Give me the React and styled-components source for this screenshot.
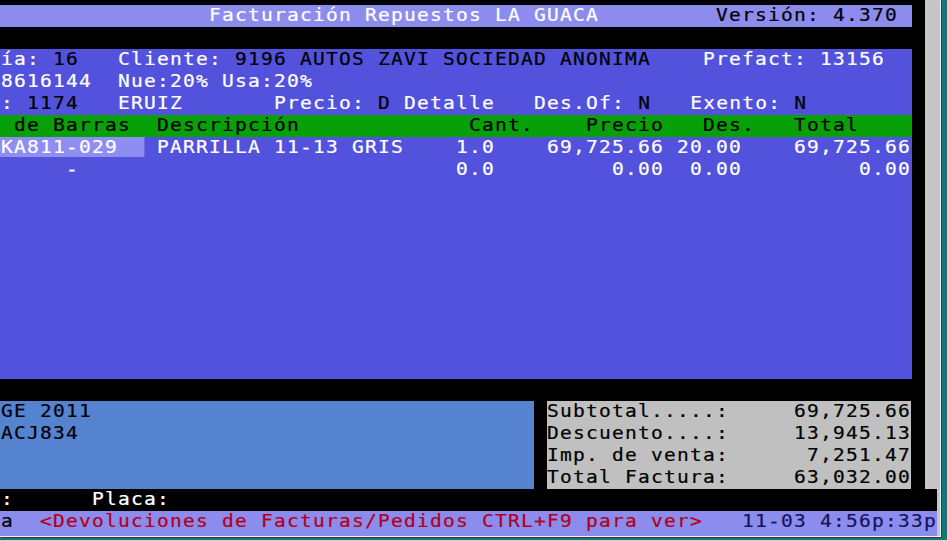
import React from 'react';
import styled, { createGlobalStyle } from 'styled-components';

// console grid: 13px cells, 22px rows, first visible column is -1 (cropped)
const CELL = 13;
const STRETCH = 1.15;
const FONT_SIZE = 17;
const ADVANCE = 0.60205 * FONT_SIZE;

const tones = {
  w: '#ffffff',
  k: '#000000',
  r: '#b00018',
  n: '#14145a',
  hi: '#ffffff',
};

const GlobalStyle = createGlobalStyle`
  html, body {
    margin: 0;
    padding: 0;
  }
  body {
    background: #0b7b7b;
    overflow: hidden;
  }
`;

const Desktop = styled.div`
  width: 947px;
  height: 540px;
  background: #0b7b7b;
`;

const Window = styled.div`
  width: 940px;
  height: 536px;
  background: #000;
  border-right: 1px solid #f0f0f0;
  border-bottom: 1px solid #f0f0f0;
  box-shadow: 1px 1px 0 #3c3c3c;
  display: flex;
  flex-direction: column;
  font-family: "DejaVu Sans Mono", monospace;
`;

const Main = styled.div`
  display: flex;
  height: 489px;
`;

const Console = styled.div`
  width: 912px;
  padding-top: 5px;
  overflow: hidden;
  display: flex;
  flex-direction: column;
`;

const Gutter = styled.div`
  width: 13px;
  background: #000;
`;

const ScrollTrack = styled.div`
  width: 15px;
  background: #c6c6c6;
`;

const Row = styled.div`
  height: 22px;
  background: ${(p) => p.$bg || '#000'};
  overflow: hidden;
`;

const Block = styled.div`
  height: ${(p) => p.$rows * 22}px;
  background: ${(p) => p.$bg};
  overflow: hidden;
`;

const Line = styled.div`
  height: 22px;
  line-height: 21px;
  font-size: ${FONT_SIZE}px;
  white-space: pre;
  letter-spacing: ${CELL / STRETCH - ADVANCE}px;
  transform: scaleX(${STRETCH});
  transform-origin: 0 0;
  margin-left: ${(p) => (p.$shift ? '-12.4px' : '0')};
  color: ${(p) => (p.$dark ? '#000' : '#fff')};
  -webkit-text-stroke: 0.2px currentColor;
`;

const Tone = styled.span`
  color: ${(p) => tones[p.$tone]};
  background: ${(p) => (p.$tone === 'hi' ? '#8e8ef2' : 'transparent')};
`;

const Panels = styled.div`
  display: grid;
  grid-template-columns: 533.6px 364px;
  column-gap: 13px;
  height: 88px;
`;

const Notes = styled.div`
  background: #5683d0;
  overflow: hidden;
`;

const Totals = styled.div`
  background: #c0c0c0;
  overflow: hidden;
`;

const Footer = styled.div`
  width: 937px;
  border-right: 3px solid #c6c6c6;
`;

const StatusBar = styled.div`
  height: 25px;
  background: #8c8cee;
  overflow: hidden;
`;

function Cells({ parts }) {
  let pos = -1;
  return parts.map(([col, text, tone], i) => {
    const gap = ' '.repeat(Math.max(0, col - pos));
    pos = col + text.length;
    return (
      <React.Fragment key={i}>
        {gap}
        <Tone $tone={tone}>{text}</Tone>
      </React.Fragment>
    );
  });
}

const title = [
  [16, 'Facturación Repuestos LA GUACA', 'w'],
  [55, 'Versión: 4.370', 'k'],
];

const info = [
  [
    [-1, 'Día:', 'w'],
    [4, '16', 'k'],
    [9, 'Cliente:', 'w'],
    [18, '9196 AUTOS ZAVI SOCIEDAD ANONIMA', 'k'],
    [54, 'Prefact: 13156', 'w'],
  ],
  [
    [0, '8616144', 'w'],
    [9, 'Nue:20% Usa:20%', 'w'],
  ],
  [
    [0, ':', 'w'],
    [2, '1174', 'k'],
    [9, 'ERUIZ', 'w'],
    [21, 'Precio:', 'w'],
    [29, 'D', 'k'],
    [31, 'Detalle', 'w'],
    [41, 'Des.Of:', 'w'],
    [49, 'N', 'k'],
    [53, 'Exento:', 'w'],
    [61, 'N', 'k'],
  ],
];

const columns = [
  [-1, 'o de Barras', 'k'],
  [12, 'Descripción', 'k'],
  [36, 'Cant.', 'k'],
  [45, 'Precio', 'k'],
  [54, 'Des.', 'k'],
  [61, 'Total', 'k'],
];

const items = [
  [
    [-1, ' KA811-029  ', 'hi'],
    [12, 'PARRILLA 11-13 GRIS', 'w'],
    [35, '1.0', 'w'],
    [42, '69,725.66', 'w'],
    [52, '20.00', 'w'],
    [61, '69,725.66', 'w'],
  ],
  [
    [5, '-', 'w'],
    [35, '0.0', 'w'],
    [47, '0.00', 'w'],
    [53, '0.00', 'w'],
    [66, '0.00', 'w'],
  ],
];

const notes = ['AGE 2011', ' ACJ834'];

const totals = [
  ['Subtotal.....:', '69,725.66'],
  ['Descuento....:', '13,945.13'],
  ['Imp. de venta:', '7,251.47'],
  ['Total Factura:', '63,032.00'],
];

const placa = [
  [0, ':', 'w'],
  [7, 'Placa:', 'w'],
];

const status = [
  [0, 'a', 'k'],
  [3, '<Devoluciones de Facturas/Pedidos CTRL+F9 para ver>', 'r'],
  [57, '11-03 4:56p:33p', 'n'],
];

export default function App() {
  return (
    <Desktop>
      <GlobalStyle />
      <Window>
        <Main>
          <Console>
            <Row $bg="#8c8cee">
              <Line $shift><Cells parts={title} /></Line>
            </Row>
            <Row />
            <Block $bg="#5252dc" $rows={3}>
              {info.map((parts, i) => (
                <Line key={i} $shift><Cells parts={parts} /></Line>
              ))}
            </Block>
            <Row $bg="#08a008">
              <Line $shift><Cells parts={columns} /></Line>
            </Row>
            <Block $bg="#5252dc" $rows={11}>
              {items.map((parts, i) => (
                <Line key={i} $shift><Cells parts={parts} /></Line>
              ))}
            </Block>
            <Row />
            <Panels>
              <Notes>
                {notes.map((text) => (
                  <Line key={text} $shift $dark>{text}</Line>
                ))}
              </Notes>
              <Totals>
                {totals.map(([label, value]) => (
                  <Line key={label} $dark>
                    {label.padEnd(28 - value.length) + value}
                  </Line>
                ))}
              </Totals>
            </Panels>
          </Console>
          <Gutter />
          <ScrollTrack />
        </Main>
        <Footer>
          <Row>
            <Line $shift><Cells parts={placa} /></Line>
          </Row>
          <StatusBar>
            <Line $shift><Cells parts={status} /></Line>
          </StatusBar>
        </Footer>
      </Window>
    </Desktop>
  );
}
